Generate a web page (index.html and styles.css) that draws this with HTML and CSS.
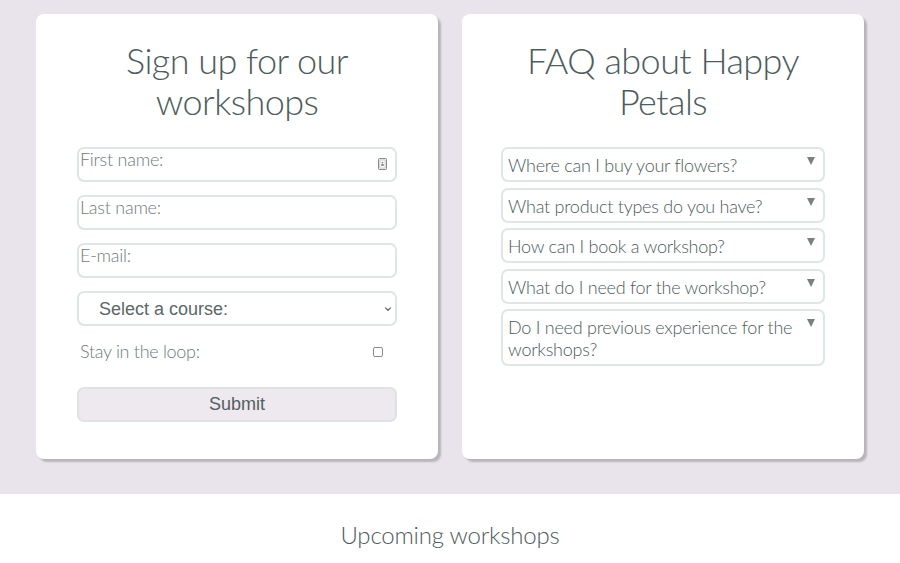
FILE: index.html
```html
<!DOCTYPE html>
<html lang="en">
<head>
<meta charset="utf-8">
<title>Happy Petals</title>
<link rel="stylesheet" href="styles.css">
</head>
<body>
<section class="top">
  <div class="card">
    <h2 class="card-title">Sign up for our workshops</h2>
    <form class="signup">
      <div class="field">
        <input class="text-input" type="text" placeholder="First name:">
        <svg class="autofill" width="9" height="12" viewBox="0 0 9 12"><rect x="0.5" y="0.5" width="8" height="11" rx="1" fill="#eeeeee" stroke="#8a8a8a"/><rect x="2" y="2" width="5" height="8" fill="#ffffff" stroke="#b5b5b5" stroke-width="0.6"/><circle cx="4.5" cy="4.6" r="0.9" fill="#888"/><rect x="3.3" y="6" width="2.4" height="2" fill="#888"/></svg>
      </div>
      <input class="text-input" type="text" placeholder="Last name:">
      <input class="text-input" type="email" placeholder="E-mail:">
      <div class="select-wrap">
        <select class="course">
          <option>Select a course:</option>
        </select>
        <svg class="chevron" width="8" height="6" viewBox="0 0 8 6"><path d="M1.2 1.6 L4 4.3 L6.8 1.6" fill="none" stroke="#666" stroke-width="1.3"/></svg>
      </div>
      <label class="loop">
        <span>Stay in the loop:</span>
        <input class="check" type="checkbox">
      </label>
      <button class="submit" type="button">Submit</button>
    </form>
  </div>
  <div class="card">
    <h2 class="card-title">FAQ about Happy Petals</h2>
    <div class="faq">
      <details class="qa"><summary>Where can I buy your flowers?</summary></details>
      <details class="qa"><summary>What product types do you have?</summary></details>
      <details class="qa"><summary>How can I book a workshop?</summary></details>
      <details class="qa"><summary>What do I need for the workshop?</summary></details>
      <details class="qa"><summary>Do I need previous experience for the workshops?</summary></details>
    </div>
  </div>
</section>
<section class="upcoming">
  <h2 class="upcoming-title">Upcoming workshops</h2>
</section>
</body>
</html>
```
FILE: styles.css
```css
* { box-sizing: border-box; }
html, body { margin: 0; padding: 0; }
body {
  font-family: Lato, "Open Sans", sans-serif;
  font-weight: 300;
  color: #4d5c5c;
  background: #ffffff;
}
.top {
  background: #e9e4eb;
  display: flex;
  gap: 24px;
  padding: 14px 36px 35px;
}
.card {
  flex: 1;
  background: #ffffff;
  border-radius: 8px;
  box-shadow: 3px 3px 2px #b9b4ba;
  height: 445px;
  display: flex;
  flex-direction: column;
  align-items: center;
}
.card-title {
  margin: 26px 0 0;
  font-weight: 300;
  font-size: 36px;
  line-height: 41px;
  letter-spacing: -0.55px;
  text-align: center;
  color: #4d5c5c;
  width: 300px;
}
.signup {
  width: 320px;
  margin-top: 25px;
  display: flex;
  flex-direction: column;
  gap: 13px;
}
.field { position: relative; }
.text-input {
  display: block;
  width: 100%;
  height: 35px;
  border: 2px solid #dde6e3;
  border-radius: 7px;
  padding: 0 1px 11px;
  font-family: Lato, sans-serif;
  font-weight: 300;
  font-size: 18px;
  letter-spacing: -0.25px;
  color: #4d5c5c;
  background: #fff;
  outline: none;
}
.text-input::placeholder { color: #6d7a7a; opacity: 1; }
.autofill {
  position: absolute;
  right: 10px;
  top: 11px;
}
.select-wrap { position: relative; }
.course {
  display: block;
  width: 100%;
  height: 35px;
  appearance: none;
  -webkit-appearance: none;
  border: 2px solid #dde6e3;
  border-radius: 7px;
  background: #fff;
  padding: 0 0 0 20px;
  font-family: "Liberation Sans", Arial, sans-serif;
  font-size: 18px;
  color: #5b6767;
}
.chevron {
  position: absolute;
  right: 5px;
  top: 15px;
}
.loop {
  display: flex;
  justify-content: space-between;
  align-items: center;
  height: 22px;
  margin-top: 1px;
  padding: 0 14px 0 3px;
  font-size: 18px;
  letter-spacing: -0.3px;
  color: #6d7a7a;
  margin-bottom: 12px;
}
.check {
  appearance: none;
  -webkit-appearance: none;
  width: 10px;
  height: 10px;
  margin: 2px 0 0;
  border: 1px solid #8a8a8a;
  border-radius: 2px;
  background: #fff;
}
.submit {
  height: 35px;
  width: 100%;
  border: 2px solid #dde3e2;
  border-radius: 7px;
  background: #ede9ef;
  font-family: "Liberation Sans", Arial, sans-serif;
  font-size: 18px;
  color: #555e5e;
}
.faq {
  width: 324px;
  margin-top: 25px;
  display: flex;
  flex-direction: column;
  gap: 5.5px;
}
.qa {
  border: 2px solid #dfe7e4;
  border-radius: 7px;
}
.qa summary {
  list-style: none;
  display: flex;
  justify-content: space-between;
  align-items: flex-start;
  gap: 14px;
  padding: 5px 8px 4px 5px;
  font-size: 18px;
  line-height: 22px;
  letter-spacing: -0.25px;
  color: #4d5c5c;
}
.qa summary::-webkit-details-marker { display: none; }
.qa summary::after {
  content: "";
  flex: none;
  width: 0;
  height: 0;
  margin-top: 3px;
  border-left: 4.5px solid transparent;
  border-right: 4.5px solid transparent;
  border-top: 8px solid #7a7f7f;
}
.upcoming {
  padding: 26px 0 24px;
  text-align: center;
}
.upcoming-title {
  margin: 0;
  font-weight: 300;
  font-size: 24px;
  letter-spacing: -0.2px;
  color: #4d5c5c;
}
```
